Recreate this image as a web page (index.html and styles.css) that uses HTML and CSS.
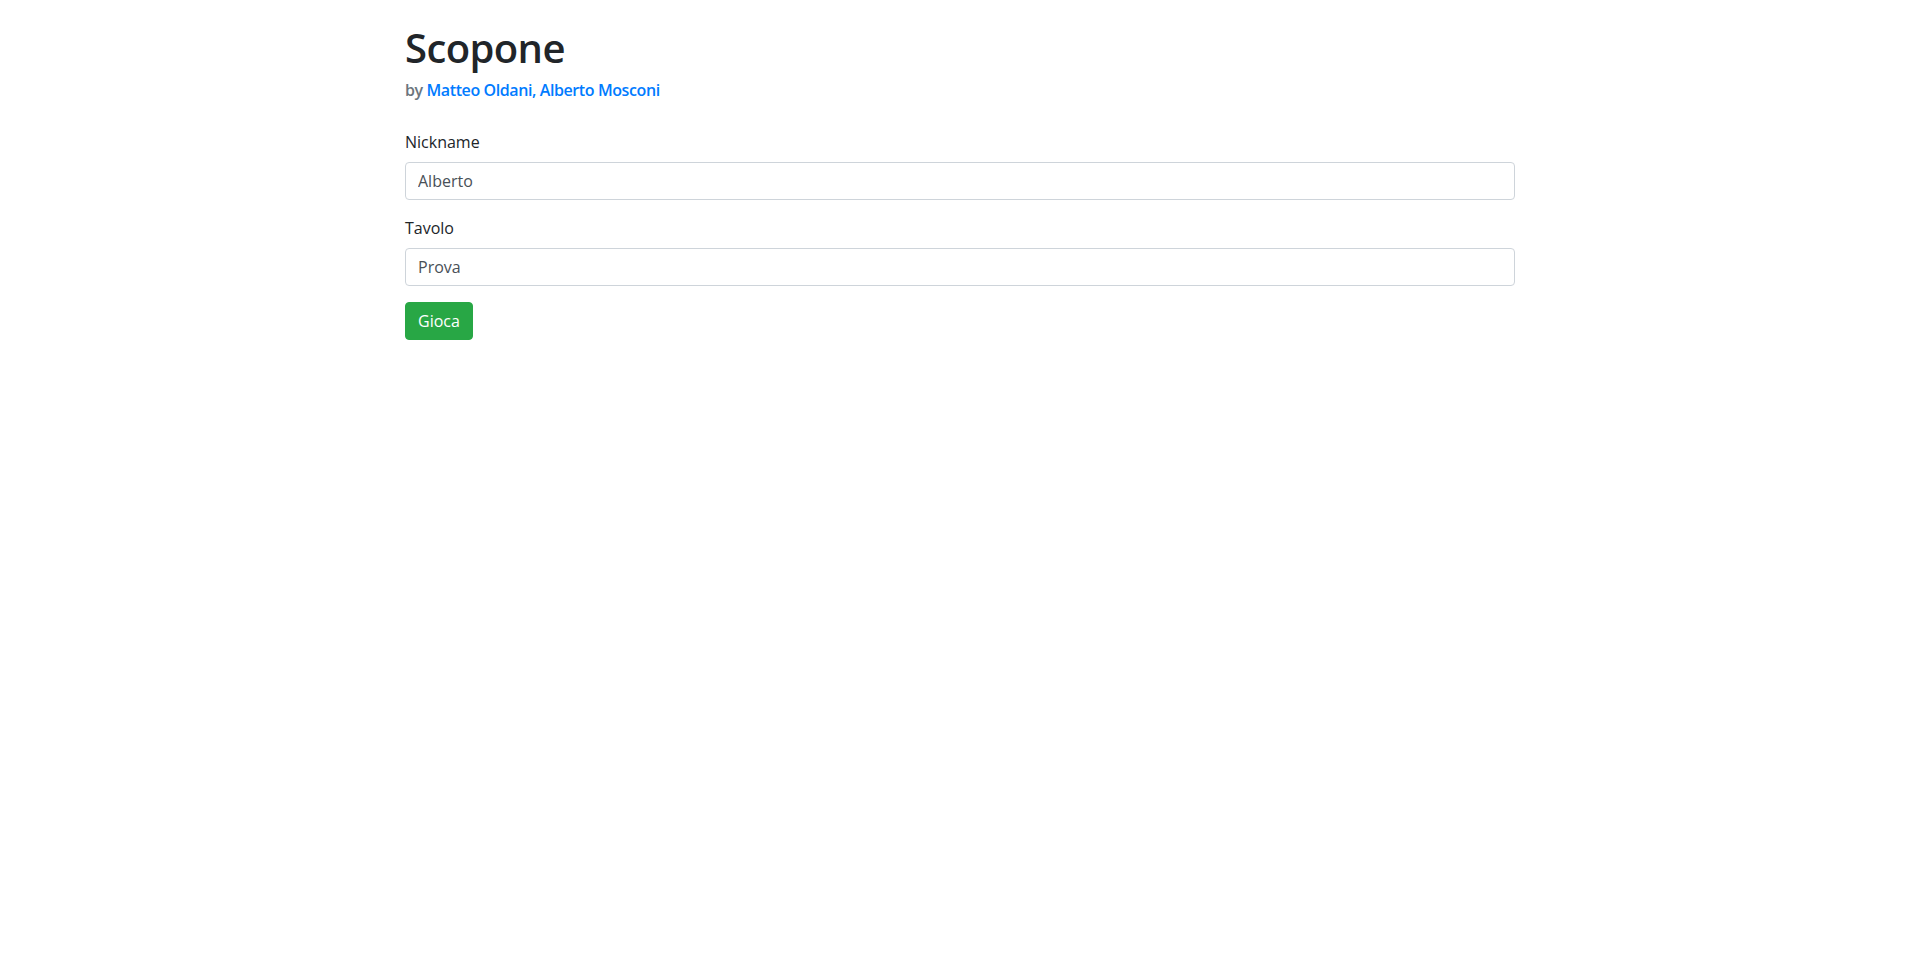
FILE: index.html
```html
<!DOCTYPE html>
<html lang="it">
<head>
<meta charset="utf-8">
<title>Scopone</title>
<link rel="stylesheet" href="styles.css">
</head>
<body>
<div class="container">
  <h1 class="title">Scopone</h1>
  <h6 class="authors">by <a href="#">Matteo Oldani, Alberto Mosconi</a></h6>
  <form class="form">
    <div class="form-group">
      <label for="nick">Nickname</label>
      <input id="nick" class="form-control" type="text" value="Alberto">
    </div>
    <div class="form-group">
      <label for="table">Tavolo</label>
      <input id="table" class="form-control" type="text" value="Prova">
    </div>
    <button type="button" class="btn-success">Gioca</button>
  </form>
</div>
</body>
</html>
```
FILE: styles.css
```css
* { box-sizing: border-box; }
html, body { margin: 0; padding: 0; }
body {
  font-family: "Open Sans", "Noto Sans", sans-serif;
  font-size: 16px;
  line-height: 1.5;
  color: #212529;
  background: #fff;
}
.container {
  width: 1140px;
  margin: 0 auto;
  padding: 24px 15px 0;
}
.title {
  margin: 0 0 6px;
  font-size: 40px;
  font-weight: 600;
  line-height: 1.2;
  color: #212529;
  letter-spacing: -0.6px;
}
.authors {
  margin: 0 0 28px;
  color: #6c757d;
  font-size: 16px;
  font-weight: 600;
  line-height: 24px;
  letter-spacing: -0.4px;
}
.authors a {
  color: #007bff;
  text-decoration: none;
}
.form-group { margin-bottom: 16px; }
.form-group label {
  display: inline-block;
  margin-bottom: 8px;
}
.form-control {
  display: block;
  width: 100%;
  height: 38px;
  padding: 6px 12px;
  font-family: inherit;
  font-size: 16px;
  line-height: 1.5;
  color: #495057;
  background: #fff;
  border: 1px solid #ced4da;
  border-radius: 4px;
}
.btn-success {
  display: inline-block;
  height: 38px;
  padding: 6px 12px;
  font-family: inherit;
  font-size: 16px;
  line-height: 1.5;
  color: #fff;
  background: #28a745;
  border: 1px solid #28a745;
  border-radius: 4px;
  cursor: pointer;
}
```
